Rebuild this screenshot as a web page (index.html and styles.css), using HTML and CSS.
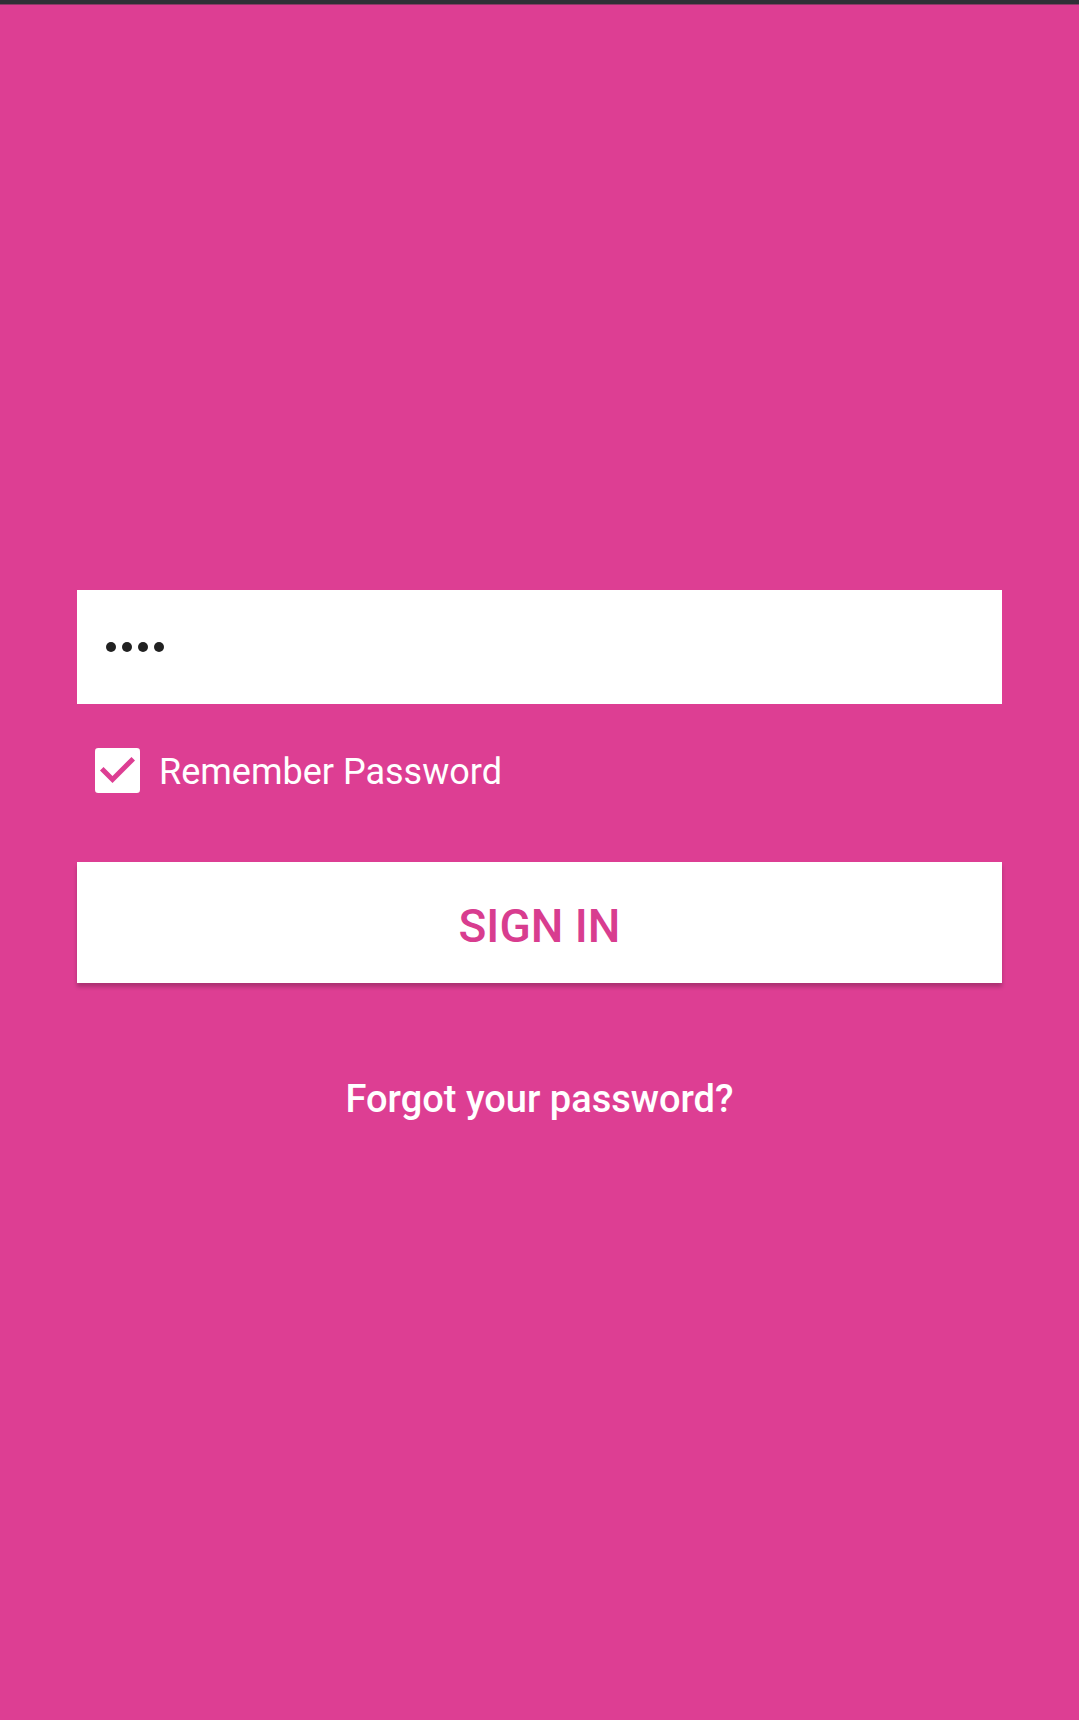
FILE: index.html
```html
<!DOCTYPE html>
<html>
	<head>
		<meta charset="utf-8">
		<meta name="viewport" content="width=device-width, initial-scale=1.0">
		<link rel="stylesheet" href="styles.css">
		<title>Sign in</title>
	</head>
	<body>
		<div class="statusbar"></div>
		<main class="login">
			<div class="password">
				<span class="dot"></span>
				<span class="dot"></span>
				<span class="dot"></span>
				<span class="dot"></span>
			</div>
			<label class="remember">
				<svg class="check" viewBox="3 3 18 18">
					<rect x="3" y="3" width="18" height="18" rx="1.3" fill="#fff"/>
					<path d="M10 17l-5-5 1.41-1.41L10 14.17l7.59-7.59L19 8l-9 9z" fill="#dd3e93"/>
				</svg>
				<span>Remember Password</span>
			</label>
			<button class="signin">SIGN IN</button>
			<a class="forgot" href="javascript:;">Forgot your password?</a>
		</main>
	</body>
</html>
```

FILE: styles.css
```css
* {
	margin: 0;
	padding: 0;
	box-sizing: border-box;
}

body {
	background-color: #dd3e93;
	font-family: Roboto, "Liberation Sans", sans-serif;
	height: 1720px;
}

.statusbar {
	height: 5px;
	background-color: #2f3036;
	border-bottom: 1px solid #8a3a66;
}

.login {
	display: flex;
	flex-direction: column;
	padding: 585px 77px 0;
}

.password {
	display: flex;
	align-items: center;
	gap: 6px;
	height: 114px;
	padding-left: 29px;
	background-color: #fff;
}

.dot {
	width: 10px;
	height: 10px;
	border-radius: 50%;
	background-color: #212121;
}

.remember {
	display: flex;
	align-items: center;
	gap: 19px;
	margin-top: 44px;
	padding-left: 18px;
	height: 45px;
	color: #fff;
	font-size: 36px;
	line-height: 45px;
}

.check {
	width: 45px;
	height: 45px;
	display: block;
}

.remember span {
	padding-top: 4px;
}

.signin {
	margin-top: 69px;
	height: 121px;
	padding-top: 6px;
	border: none;
	background-color: #fff;
	color: #d83d8f;
	font-family: Roboto, "Liberation Sans", sans-serif;
	font-size: 46px;
	font-weight: 500;
	box-shadow: 0 4px 4px rgba(0, 0, 0, 0.22);
}

.forgot {
	margin-top: 91px;
	align-self: center;
	color: #fff;
	font-size: 38px;
	font-weight: 500;
	line-height: 50px;
	text-decoration: none;
}
```
